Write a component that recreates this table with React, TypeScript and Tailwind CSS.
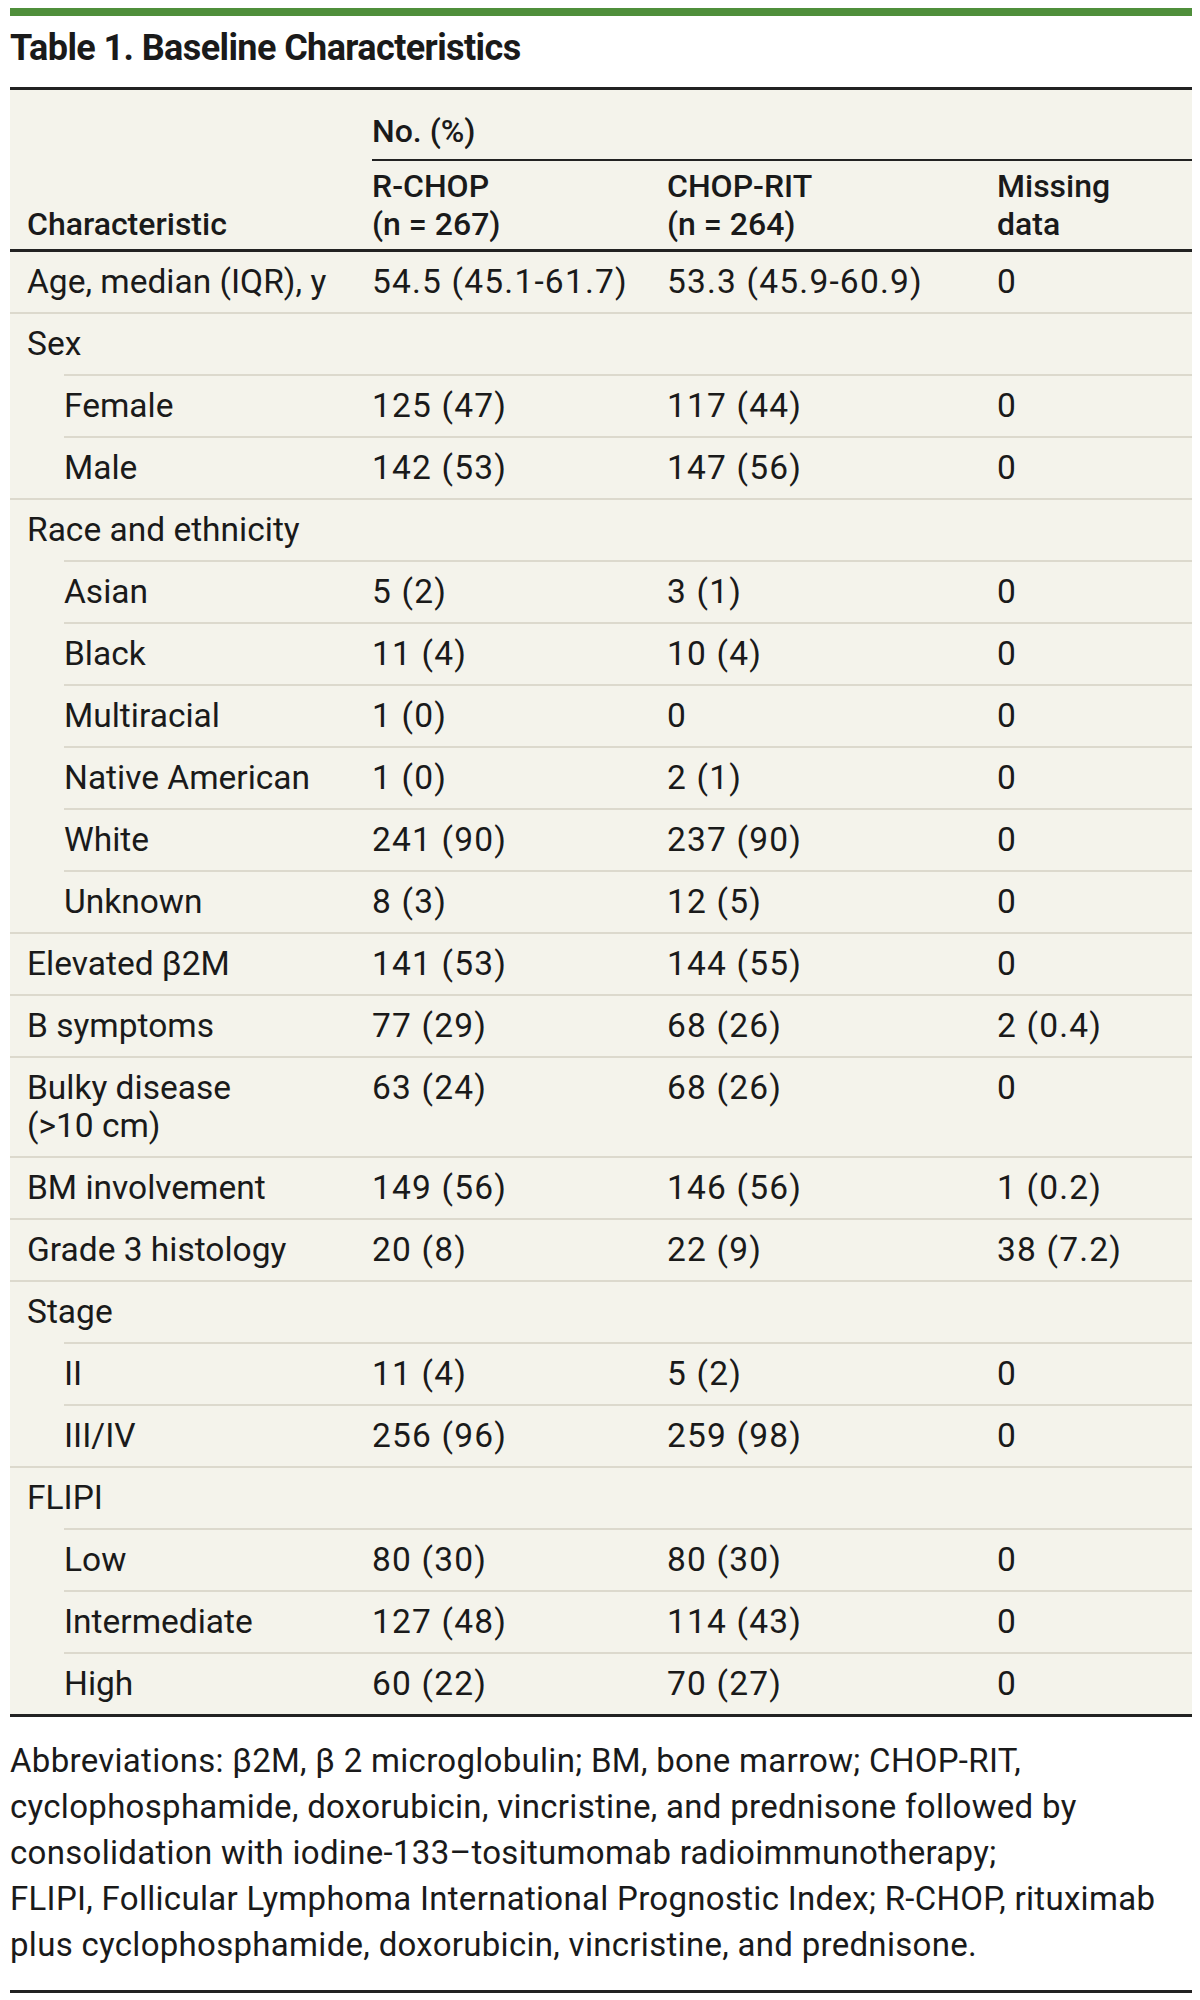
import React from "react";

type Row = {
  label: string;
  sub?: boolean;
  a?: string;
  b?: string;
  m?: string;
};

const rows: Row[] = [
  { label: "Age, median (IQR), y", a: "54.5 (45.1-61.7)", b: "53.3 (45.9-60.9)", m: "0" },
  { label: "Sex" },
  { label: "Female", sub: true, a: "125 (47)", b: "117 (44)", m: "0" },
  { label: "Male", sub: true, a: "142 (53)", b: "147 (56)", m: "0" },
  { label: "Race and ethnicity" },
  { label: "Asian", sub: true, a: "5 (2)", b: "3 (1)", m: "0" },
  { label: "Black", sub: true, a: "11 (4)", b: "10 (4)", m: "0" },
  { label: "Multiracial", sub: true, a: "1 (0)", b: "0", m: "0" },
  { label: "Native American", sub: true, a: "1 (0)", b: "2 (1)", m: "0" },
  { label: "White", sub: true, a: "241 (90)", b: "237 (90)", m: "0" },
  { label: "Unknown", sub: true, a: "8 (3)", b: "12 (5)", m: "0" },
  { label: "Elevated β2M", a: "141 (53)", b: "144 (55)", m: "0" },
  { label: "B symptoms", a: "77 (29)", b: "68 (26)", m: "2 (0.4)" },
  { label: "Bulky disease\n(>10 cm)", a: "63 (24)", b: "68 (26)", m: "0" },
  { label: "BM involvement", a: "149 (56)", b: "146 (56)", m: "1 (0.2)" },
  { label: "Grade 3 histology", a: "20 (8)", b: "22 (9)", m: "38 (7.2)" },
  { label: "Stage" },
  { label: "II", sub: true, a: "11 (4)", b: "5 (2)", m: "0" },
  { label: "III/IV", sub: true, a: "256 (96)", b: "259 (98)", m: "0" },
  { label: "FLIPI" },
  { label: "Low", sub: true, a: "80 (30)", b: "80 (30)", m: "0" },
  { label: "Intermediate", sub: true, a: "127 (48)", b: "114 (43)", m: "0" },
  { label: "High", sub: true, a: "60 (22)", b: "70 (27)", m: "0" },
];

const font = { fontFamily: "Roboto, 'Liberation Sans', sans-serif" };

const TableRow = ({ row, first }: { row: Row; first: boolean }) => {
  return (
    <div className={row.sub ? "pl-[54px]" : ""}>
      <div
        className={`flex py-[11px] ${first ? "" : "border-t-2 border-[#dcd9cd]"}`}
      >
        <div
          className={`whitespace-pre-line ${row.sub ? "w-[308px]" : "w-[362px] pl-[17px]"}`}
        >
          {row.label}
        </div>
        <div className="w-[295px] tracking-[1.2px]">{row.a}</div>
        <div className="w-[330px] tracking-[1.2px]">{row.b}</div>
        <div className="flex-1 tracking-[1.2px]">{row.m}</div>
      </div>
    </div>
  );
};

export default function App() {
  return (
    <div className="min-h-[2000px] bg-white text-[#1a1a1a]" style={font}>
      <div className="ml-[10px] w-[1182px] pt-[8px]">
        <div className="h-[8px] bg-[#4f8f3b]" />
        <h1 className="mt-[12px] text-[36px] font-bold leading-[40px] tracking-[-0.6px]">
          Table 1. Baseline Characteristics
        </h1>

        <div className="mt-[19px] border-y-[3px] border-[#222] bg-[#f4f3eb] text-[33.5px] leading-[38px]">
          {/* header */}
          <div className="flex border-b-[3px] border-[#222] text-[32px] font-medium">
            <div className="flex w-[362px] items-end pl-[17px] pb-[6px]">
              Characteristic
            </div>
            <div className="flex flex-1 flex-col">
              <div className="border-b-2 border-[#222] pt-[22px] pb-[9px]">No. (%)</div>
              <div className="flex pt-[6px] pb-[6px]">
                <div className="w-[295px]">
                  R-CHOP
                  <br />
                  (n = 267)
                </div>
                <div className="w-[330px]">
                  CHOP-RIT
                  <br />
                  (n = 264)
                </div>
                <div className="flex-1">
                  Missing
                  <br />
                  data
                </div>
              </div>
            </div>
          </div>

          {rows.map((row, i) => (
            <TableRow key={row.label} row={row} first={i === 0} />
          ))}
        </div>

        <p className="border-b-[3px] border-[#222] pt-[21px] pb-[22px] text-[33px] leading-[46px] tracking-[0.3px]">
          Abbreviations: β2M, β 2 microglobulin; BM, bone marrow; CHOP-RIT,
          <br />
          cyclophosphamide, doxorubicin, vincristine, and prednisone followed by
          <br />
          consolidation with iodine-133–tositumomab radioimmunotherapy;
          <br />
          FLIPI, Follicular Lymphoma International Prognostic Index; R-CHOP, rituximab
          <br />
          plus cyclophosphamide, doxorubicin, vincristine, and prednisone.
        </p>
      </div>
    </div>
  );
}
